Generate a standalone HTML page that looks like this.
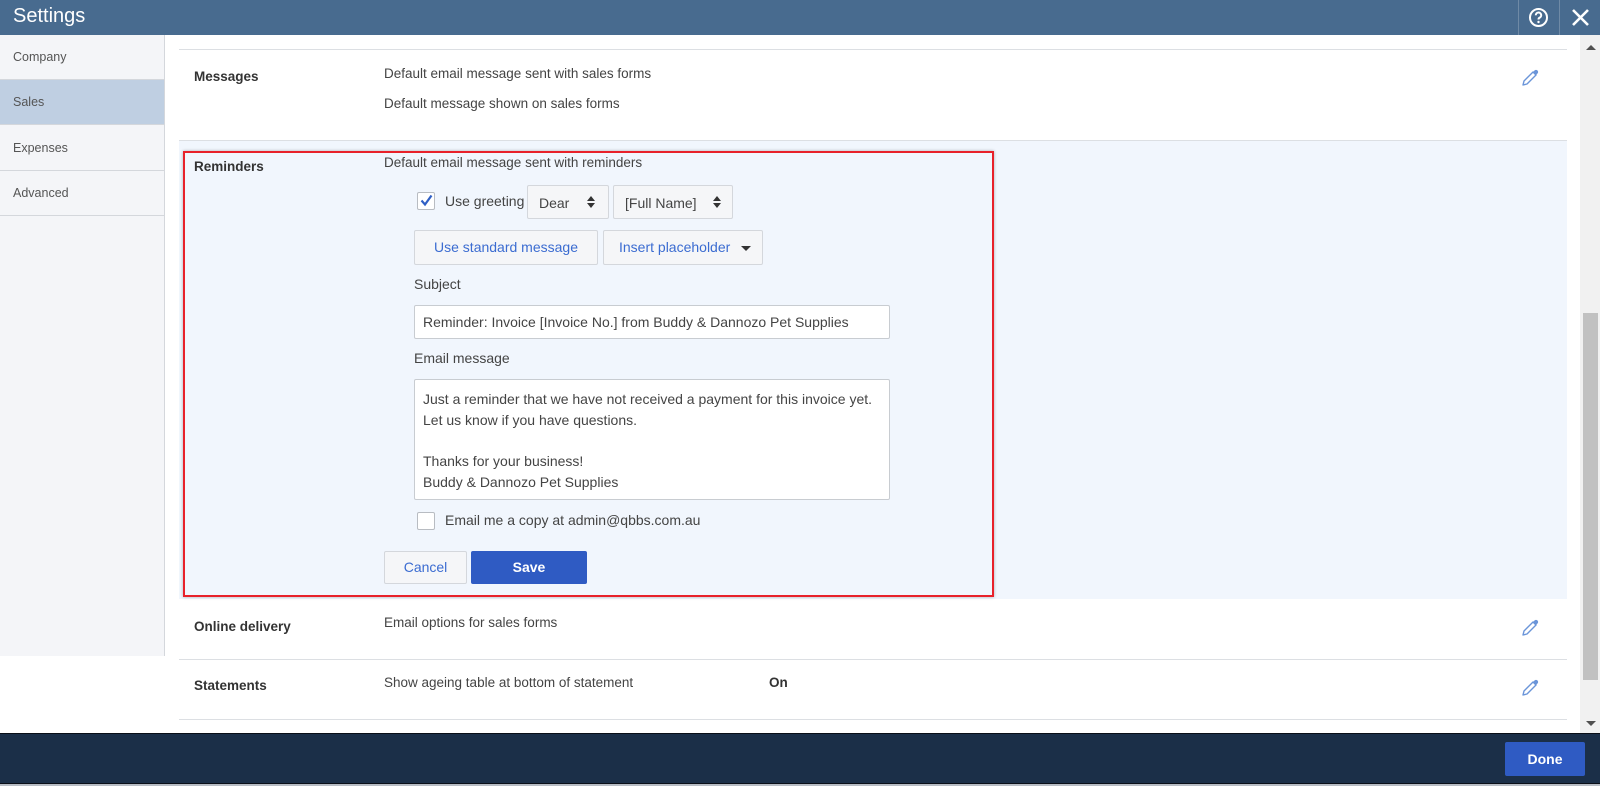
<!DOCTYPE html>
<html><head><meta charset="utf-8"><style>
*{box-sizing:border-box;margin:0;padding:0}
body{width:1600px;height:792px;overflow:hidden;background:#fff;font-family:"Liberation Sans",Arial,sans-serif;color:#393a3d;position:relative}
.abs{position:absolute}
.hdr{left:0;top:0;width:1600px;height:35px;background:#486b8f}
.hdr .t{left:13px;top:5px;font-size:20px;color:#fff}
.side{left:0;top:35px;width:165px;height:621px;background:#f4f5f8;border-right:1px solid #d4d7dc}
.si{left:0;width:164px;height:45px;font-size:12.5px;color:#555;padding-left:13px;line-height:45px;border-bottom:1px solid #d4d7dc}
.hl{left:179px;width:1388px;height:1px;background:#dcdfe3}
.lbl{left:194px;font-size:13.5px;font-weight:bold;color:#333}
.d{left:384px;font-size:13.5px;color:#444}
.f{font-size:14px;color:#444}
.btn{border:1px solid #d4d7dc;background:#f5f6f8;border-radius:2px;font-size:14px;color:#3b6cd1;text-align:center}
.inp{background:#fff;border:1px solid #c8ccd1;border-radius:2px}
.cb{width:18px;height:18px;background:#fff;border:1px solid #b8bcc2;border-radius:2px}
.pen{width:18px;height:18px}
</style></head><body>
<div class="abs hdr"><div class="abs t">Settings</div>
<div class="abs" style="left:1518px;top:0;width:1px;height:35px;background:#6f8aa6"></div>
<div class="abs" style="left:1559px;top:0;width:1px;height:35px;background:#6f8aa6"></div>
<svg class="abs" style="left:1528px;top:7px" width="21" height="21" viewBox="0 0 21 21"><circle cx="10.5" cy="10.5" r="8.5" fill="none" stroke="#fff" stroke-width="2"/><path d="M7.8 8.3a2.7 2.7 0 1 1 3.8 2.4c-.8.4-1.1.9-1.1 1.8" fill="none" stroke="#fff" stroke-width="2"/><circle cx="10.5" cy="15" r="1.2" fill="#fff"/></svg>
<svg class="abs" style="left:1570px;top:7px" width="21" height="21" viewBox="0 0 21 21"><path d="M3 3L18 18M18 3L3 18" stroke="#fff" stroke-width="2.6"/></svg>
</div>
<div class="abs side">
<div class="abs si" style="top:0">Company</div>
<div class="abs si" style="top:45px;background:#bfcfe2">Sales</div>
<div class="abs si" style="top:91px">Expenses</div>
<div class="abs si" style="top:136px">Advanced</div>
</div>
<!-- scrollbar -->
<div class="abs" style="left:1580px;top:35px;width:20px;height:699px;background:#f1f1f1"></div>
<div class="abs" style="left:1583px;top:313px;width:15px;height:367px;background:#c1c1c1"></div>
<div class="abs" style="left:1586px;top:45px;width:0;height:0;border-left:5px solid transparent;border-right:5px solid transparent;border-bottom:5px solid #505050"></div>
<div class="abs" style="left:1586px;top:721px;width:0;height:0;border-left:5px solid transparent;border-right:5px solid transparent;border-top:5px solid #505050"></div>

<div class="abs hl" style="top:49px"></div>
<div class="abs lbl" style="top:69px">Messages</div>
<div class="abs d" style="top:66px">Default email message sent with sales forms</div>
<div class="abs d" style="top:96px">Default message shown on sales forms</div>

<div class="abs" style="left:179px;top:140px;width:1388px;height:459px;background:#f1f6fd;border-top:1px solid #dcdfe3"></div>
<div class="abs" style="left:183px;top:151px;width:811px;height:446px;border:2px solid #e8212a;box-shadow:0 0 3px rgba(0,0,0,.3)"></div>
<div class="abs lbl" style="top:159px">Reminders</div>
<div class="abs d" style="top:155px">Default email message sent with reminders</div>

<div class="abs cb" style="left:417px;top:192px"></div>
<svg class="abs" style="left:419px;top:193px" width="15" height="15" viewBox="0 0 15 15"><path d="M2.5 7.5L6 11.5L12.5 2.5" fill="none" stroke="#2f5fc5" stroke-width="2.2"/></svg>
<div class="abs f" style="left:445px;top:193px">Use greeting</div>
<div class="abs btn" style="left:527px;top:185px;width:82px;height:34px;color:#444;text-align:left;padding:9px 0 0 11px">Dear</div>
<div class="abs btn" style="left:613px;top:185px;width:120px;height:34px;color:#444;text-align:left;padding:9px 0 0 11px">[Full Name]</div>
<svg class="abs" style="left:587px;top:196px" width="8" height="12"><path d="M0 5L4 0L8 5ZM0 7L4 12L8 7Z" fill="#333"/></svg>
<svg class="abs" style="left:713px;top:196px" width="8" height="12"><path d="M0 5L4 0L8 5ZM0 7L4 12L8 7Z" fill="#333"/></svg>

<div class="abs btn" style="left:414px;top:230px;width:184px;height:35px;line-height:33px">Use standard message</div>
<div class="abs btn" style="left:603px;top:230px;width:160px;height:35px;line-height:33px;text-align:left;padding-left:15px">Insert placeholder</div>
<div class="abs" style="left:741px;top:246px;width:0;height:0;border-left:5px solid transparent;border-right:5px solid transparent;border-top:5px solid #333"></div>

<div class="abs f" style="left:414px;top:276px">Subject</div>
<div class="abs inp f" style="left:414px;top:305px;width:476px;height:34px;padding:8px 0 0 8px">Reminder: Invoice [Invoice No.] from Buddy &amp; Dannozo Pet Supplies</div>
<div class="abs f" style="left:414px;top:350px">Email message</div>
<div class="abs inp f" style="left:414px;top:379px;width:476px;height:121px;padding:9px 0 0 8px;line-height:20.7px">Just a reminder that we have not received a payment for this invoice yet.<br>Let us know if you have questions.<br><br>Thanks for your business!<br>Buddy &amp; Dannozo Pet Supplies</div>
<div class="abs cb" style="left:417px;top:512px"></div>
<div class="abs f" style="left:445px;top:512px">Email me a copy at admin@qbbs.com.au</div>

<div class="abs btn" style="left:384px;top:551px;width:83px;height:33px;line-height:31px">Cancel</div>
<div class="abs" style="left:471px;top:551px;width:116px;height:33px;line-height:33px;background:#2f5bc3;border-radius:2px;color:#fff;font-size:14px;font-weight:bold;text-align:center">Save</div>

<div class="abs lbl" style="top:619px">Online delivery</div>
<div class="abs d" style="top:615px">Email options for sales forms</div>
<div class="abs hl" style="top:659px"></div>
<div class="abs lbl" style="top:678px">Statements</div>
<div class="abs d" style="top:675px">Show ageing table at bottom of statement</div>
<div class="abs lbl" style="left:769px;top:675px">On</div>
<div class="abs hl" style="top:719px"></div>

<svg class="abs pen" style="left:1521px;top:69px" viewBox="0 0 18 18"><path d="M2 16L3 12L12 3L15 6L6 15Z" fill="none" stroke="#6b95d9" stroke-width="1.4" stroke-linejoin="round"/><path d="M12 3L13.5 1.5A1.9 1.9 0 0 1 16.5 4.5L15 6Z" fill="#6b95d9"/></svg>
<svg class="abs pen" style="left:1521px;top:619px" viewBox="0 0 18 18"><path d="M2 16L3 12L12 3L15 6L6 15Z" fill="none" stroke="#6b95d9" stroke-width="1.4" stroke-linejoin="round"/><path d="M12 3L13.5 1.5A1.9 1.9 0 0 1 16.5 4.5L15 6Z" fill="#6b95d9"/></svg>
<svg class="abs pen" style="left:1521px;top:679px" viewBox="0 0 18 18"><path d="M2 16L3 12L12 3L15 6L6 15Z" fill="none" stroke="#6b95d9" stroke-width="1.4" stroke-linejoin="round"/><path d="M12 3L13.5 1.5A1.9 1.9 0 0 1 16.5 4.5L15 6Z" fill="#6b95d9"/></svg>

<div class="abs" style="left:0;top:733px;width:1600px;height:51px;background:#1b2f48;border-top:1px solid #0a0f18;border-bottom:1px solid #0a0f18"></div>
<div class="abs" style="left:1505px;top:742px;width:80px;height:34px;line-height:34px;background:#2f5bc3;border-radius:2px;color:#fff;font-size:14px;font-weight:bold;text-align:center">Done</div>
<div class="abs" style="left:0;top:784px;width:1600px;height:8px;background:#fff;border-top:2px solid #b7bcc4"></div>
</body></html>
